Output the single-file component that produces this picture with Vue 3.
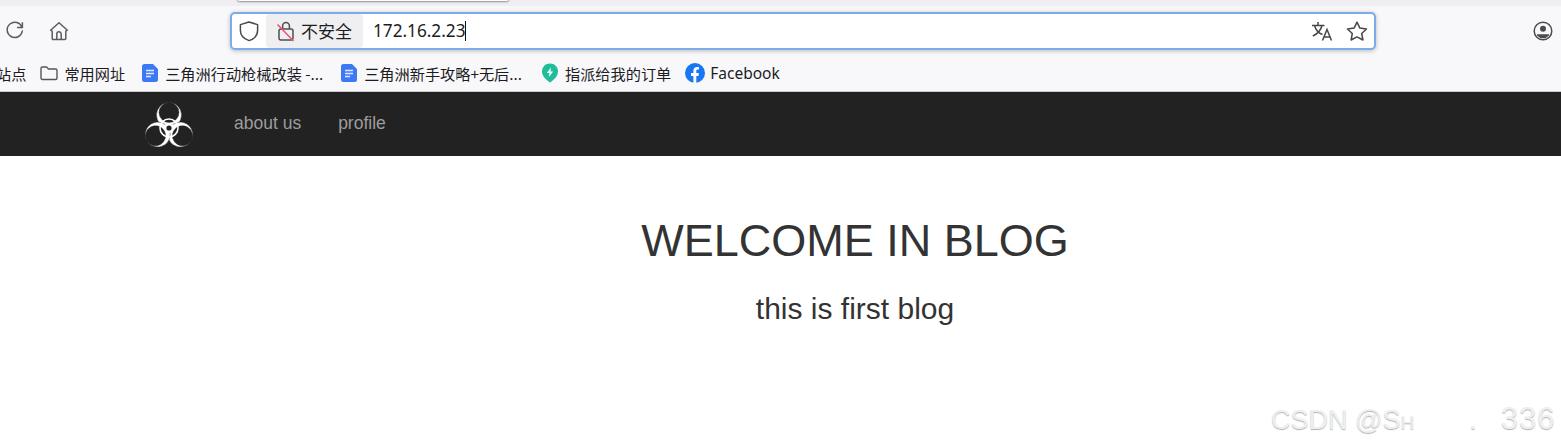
<template>
<div class="page">
  <div class="popup-edge"></div>
  <div class="tabstrip"></div>

  <div class="toolbar">
    <svg class="reload" width="22" height="22" viewBox="0 0 22 22" fill="none" stroke="#5c5c60" stroke-width="1.5">
      <path d="M18 9.5A7.6 7.6 0 1 0 18.3 13" stroke-linecap="round" />
      <path d="M18.4 4.2V9.6H13" stroke-linejoin="round" />
    </svg>
    <svg class="home" width="20" height="20" viewBox="0 0 20 20" fill="none" stroke="#5c5c60" stroke-width="1.5" stroke-linejoin="round">
      <path d="M10 1.8 1.6 9.2 3.2 10.2V17.6a1 1 0 0 0 1 1H15.8a1 1 0 0 0 1-1V10.2L18.4 9.2Z" />
      <path d="M7.8 18.4V13a2.2 2.2 0 0 1 4.4 0v5.4" />
    </svg>

    <div class="address">
      <svg class="shield" width="20" height="22" viewBox="0 0 20 22" fill="none" stroke="#4a4a4e" stroke-width="1.5" stroke-linejoin="round">
        <path d="M10 2 18.6 4.6V10.5C18.6 15.5 14.8 19 10 20.6 5.2 19 1.4 15.5 1.4 10.5V4.6Z" />
      </svg>
      <div class="secure">
        <svg width="20" height="22" viewBox="0 0 20 22" fill="none">
          <path d="M6.6 9V6a3.4 3.4 0 0 1 6.8 0v3" stroke="#4f4f53" stroke-width="1.5" />
          <path d="M5 9H15a2 2 0 0 1 2 2V18a2 2 0 0 1-2 2H5a2 2 0 0 1-2-2V11A2 2 0 0 1 5 9Z" stroke="#4f4f53" stroke-width="1.5" />
          <path d="M1.5 4.5 17.5 21" stroke="#f0506e" stroke-width="1.5" />
        </svg>
        <span>不安全</span>
      </div>
      <div class="url">172.16.2.23<i class="caret"></i></div>
      <svg class="translate" width="22" height="20" viewBox="0 0 22 20" fill="none" stroke="#47474b" stroke-width="1.5">
        <path d="M1 4.5H13.5M7 1V4.5M11 4.5C9.8 9.5 6.5 13 1.8 15M3.5 4.5C4.8 9 8 12.5 11.5 13.5" />
        <path d="M11.5 19.5 16 8.5 20.5 19.5M13 16H19" />
      </svg>
      <svg class="star" width="22" height="20" viewBox="0 0 22 20" fill="none" stroke="#47474b" stroke-width="1.5" stroke-linejoin="round">
        <path d="M11 1.2 13.9 7.1 20.5 8 15.7 12.5 16.9 19 11 15.9 5.1 19 6.3 12.5 1.5 8 8.1 7.1Z" />
      </svg>
    </div>

    <svg class="profile" width="20" height="20" viewBox="0 0 20 20">
      <circle cx="10" cy="10" r="8.8" fill="none" stroke="#4c4c50" stroke-width="1.5" />
      <circle cx="10" cy="7.7" r="3" fill="#4c4c50" />
      <path d="M4 13.2H16V14.5A8 8 0 0 1 4 14.5Z" fill="#4c4c50" />
    </svg>
  </div>

  <div class="bookmarks">
    <span class="bm cut">站点</span>
    <span class="bm folder">
      <svg width="18" height="16" viewBox="0 0 18 16" fill="none" stroke="#55555a" stroke-width="1.4" stroke-linejoin="round">
        <path d="M1 3.5A1.5 1.5 0 0 1 2.5 2H6.5L8.5 4H15.5A1.5 1.5 0 0 1 17 5.5V13A1.5 1.5 0 0 1 15.5 14.5H2.5A1.5 1.5 0 0 1 1 13Z" />
      </svg>
      常用网址
    </span>
    <span class="bm doc1">
      <svg width="16" height="18" viewBox="0 0 16 18">
        <path d="M2.5 0H11L16 5V15.5A2.5 2.5 0 0 1 13.5 18H2.5A2.5 2.5 0 0 1 0 15.5V2.5A2.5 2.5 0 0 1 2.5 0Z" fill="#3d78f5" />
        <path d="M4 6.5H12M4 9.5H12M4 12.5H9" stroke="#dfe9ff" stroke-width="1.3" />
      </svg>
      三角洲行动枪械改装 -...
    </span>
    <span class="bm doc2">
      <svg width="16" height="18" viewBox="0 0 16 18">
        <path d="M2.5 0H11L16 5V15.5A2.5 2.5 0 0 1 13.5 18H2.5A2.5 2.5 0 0 1 0 15.5V2.5A2.5 2.5 0 0 1 2.5 0Z" fill="#3d78f5" />
        <path d="M4 6.5H12M4 9.5H12M4 12.5H9" stroke="#dfe9ff" stroke-width="1.3" />
      </svg>
      三角洲新手攻略+无后...
    </span>
    <span class="bm task">
      <svg width="18" height="20" viewBox="0 0 18 20">
        <path d="M9 .5C13.5 .5 17 4 17 8.5 17 13 13 16.8 9 19.5 5 16.8 1 13 1 8.5 1 4 4.5 .5 9 .5Z" fill="#20bd9b" />
        <path d="M10 4.5 5.8 10H8.5L7.8 14 12.2 8.5H9.5Z" fill="#fff" />
      </svg>
      指派给我的订单
    </span>
    <span class="bm fb">
      <svg width="20" height="20" viewBox="0 0 20 20">
        <circle cx="10" cy="10" r="10" fill="#1877f2" />
        <path d="M8.4 20V13H6V10H8.4V7.8C8.4 5.3 9.9 4 12.1 4 13.1 4 14 4.2 14 4.2V6.6H12.8C11.6 6.6 11.3 7.3 11.3 8V10H13.9L13.5 13H11.3V20Z" fill="#fff" />
      </svg>
      Facebook
    </span>
  </div>

  <nav class="navbar">
    <svg class="logo" width="50" height="46" viewBox="0 0 50 46">
      <g v-for="angle in angles" :key="angle" :transform="`rotate(${angle} 25 27)`">
        <path
          d="M12.5 14A12.5 12.5 0 1 0 37.5 14A12.5 12.5 0 1 0 12.5 14ZM15 11.5A10 10 0 1 0 35 11.5A10 10 0 1 0 15 11.5Z"
          fill="#fff"
          fill-rule="evenodd"
          stroke="#222"
          stroke-width=".4"
        />
      </g>
      <circle cx="25" cy="27" r="9" fill="none" stroke="#fff" stroke-width="1.6" />
      <circle cx="25" cy="27" r="5" fill="#fff" />
      <circle cx="25" cy="27" r="2.6" fill="#222" />
    </svg>
    <a class="link">about us</a>
    <a class="link">profile</a>
  </nav>

  <main class="content">
    <h1>WELCOME IN BLOG</h1>
    <h2>this is first blog</h2>
  </main>

  <div class="watermark">CSDN @S<small>H</small><span class="wm-tail">.</span><span class="wm-num">336</span></div>
</div>
</template>

<script setup>
const angles = [0, 120, 240]
</script>

<style>
html, body {
  margin: 0;
  background: #fff;
  overflow: hidden;
}
</style>

<style scoped>
.page {
  position: relative;
  width: 1561px;
  height: 447px;
  overflow: hidden;
  font-family: "Liberation Sans", "Noto Sans CJK SC", sans-serif;
}

.tabstrip {
  height: 6px;
  background: #efeff3;
}

.popup-edge {
  position: absolute;
  left: 237px;
  top: -5px;
  width: 272px;
  height: 6px;
  background: #fff;
  border-radius: 4px;
  box-shadow: 0 1px 2px rgba(0, 0, 0, .4);
}

.toolbar {
  height: 50px;
  background: #f8f8fb;
  display: flex;
  align-items: center;
  box-sizing: border-box;
  padding-bottom: 1px;
}

.reload {
  margin-left: 4px;
  margin-top: -3px;
}

.home {
  margin-left: 23px;
  margin-top: 1px;
}

.address {
  margin-left: 161px;
  width: 1146px;
  height: 38px;
  box-sizing: border-box;
  border: 2px solid #7aade8;
  border-radius: 5px;
  background: #fff;
  box-shadow: 0 1px 4px rgba(0, 0, 0, .25);
  display: flex;
  align-items: center;
  color: #1c1c1e;
}

.shield {
  margin-left: 7px;
}

.secure {
  margin-left: 7px;
  width: 97px;
  height: 34px;
  box-sizing: border-box;
  padding-left: 10px;
  background: #efeff1;
  border-radius: 4px;
  display: flex;
  align-items: center;
  gap: 5px;
  font-size: 17px;
  font-family: "Noto Sans CJK SC", sans-serif;
}

.url {
  margin-left: 10px;
  flex: 1;
  display: flex;
  align-items: center;
  font-size: 17.2px;
  font-family: "Noto Sans", "Liberation Sans", sans-serif;
}

.caret {
  display: block;
  width: 1px;
  height: 20px;
  background: #111;
}

.star {
  margin-left: 13px;
  margin-right: 6px;
}

.profile {
  margin-left: 157px;
}

.bookmarks {
  height: 35px;
  background: #f8f8fb;
  border-bottom: 1px solid #c9c9c9;
  display: flex;
  align-items: center;
  font-size: 15.2px;
  color: #1c1c1e;
  font-family: "Noto Sans CJK SC", sans-serif;
  white-space: nowrap;
}

.bm {
  display: flex;
  align-items: center;
  gap: 6px;
  position: relative;
  top: -1px;
}

.cut {
  margin-left: -4px;
}

.folder {
  margin-left: 14px;
}

.doc1 {
  margin-left: 17px;
  gap: 7px;
}

.doc2 {
  margin-left: 18px;
  gap: 7px;
}

.task {
  margin-left: 19px;
  gap: 6px;
}

.fb {
  margin-left: 14px;
  gap: 5px;
  font-size: 15.5px;
  font-family: "Noto Sans", sans-serif;
}

.navbar {
  height: 64px;
  background: #222;
  display: flex;
  align-items: center;
  padding-left: 144px;
}

.logo {
  flex: none;
}

.link {
  color: #9d9d9d;
  font-size: 17.5px;
  margin-left: 37px;
  margin-bottom: 2px;
}

.logo + .link {
  margin-left: 40px;
}

.content {
  padding-left: 149px;
  text-align: center;
  color: #333;
}

h1 {
  margin: 60px 0 0;
  font-size: 45px;
  line-height: 50px;
  font-weight: 400;
}

h2 {
  margin: 26px 0 0;
  font-size: 30px;
  line-height: 34px;
  font-weight: 400;
}

.watermark {
  position: absolute;
  left: 1271px;
  top: 404px;
  font-size: 27px;
  line-height: 30px;
  white-space: nowrap;
  color: #efefef;
  text-shadow: 0 1px 1px rgba(0, 0, 0, .3);
}

.watermark small {
  font-size: 19px;
}

.wm-tail {
  margin-left: 55px;
}

.wm-num {
  margin-left: 24px;
  font-size: 31px;
  letter-spacing: 1px;
}
</style>
